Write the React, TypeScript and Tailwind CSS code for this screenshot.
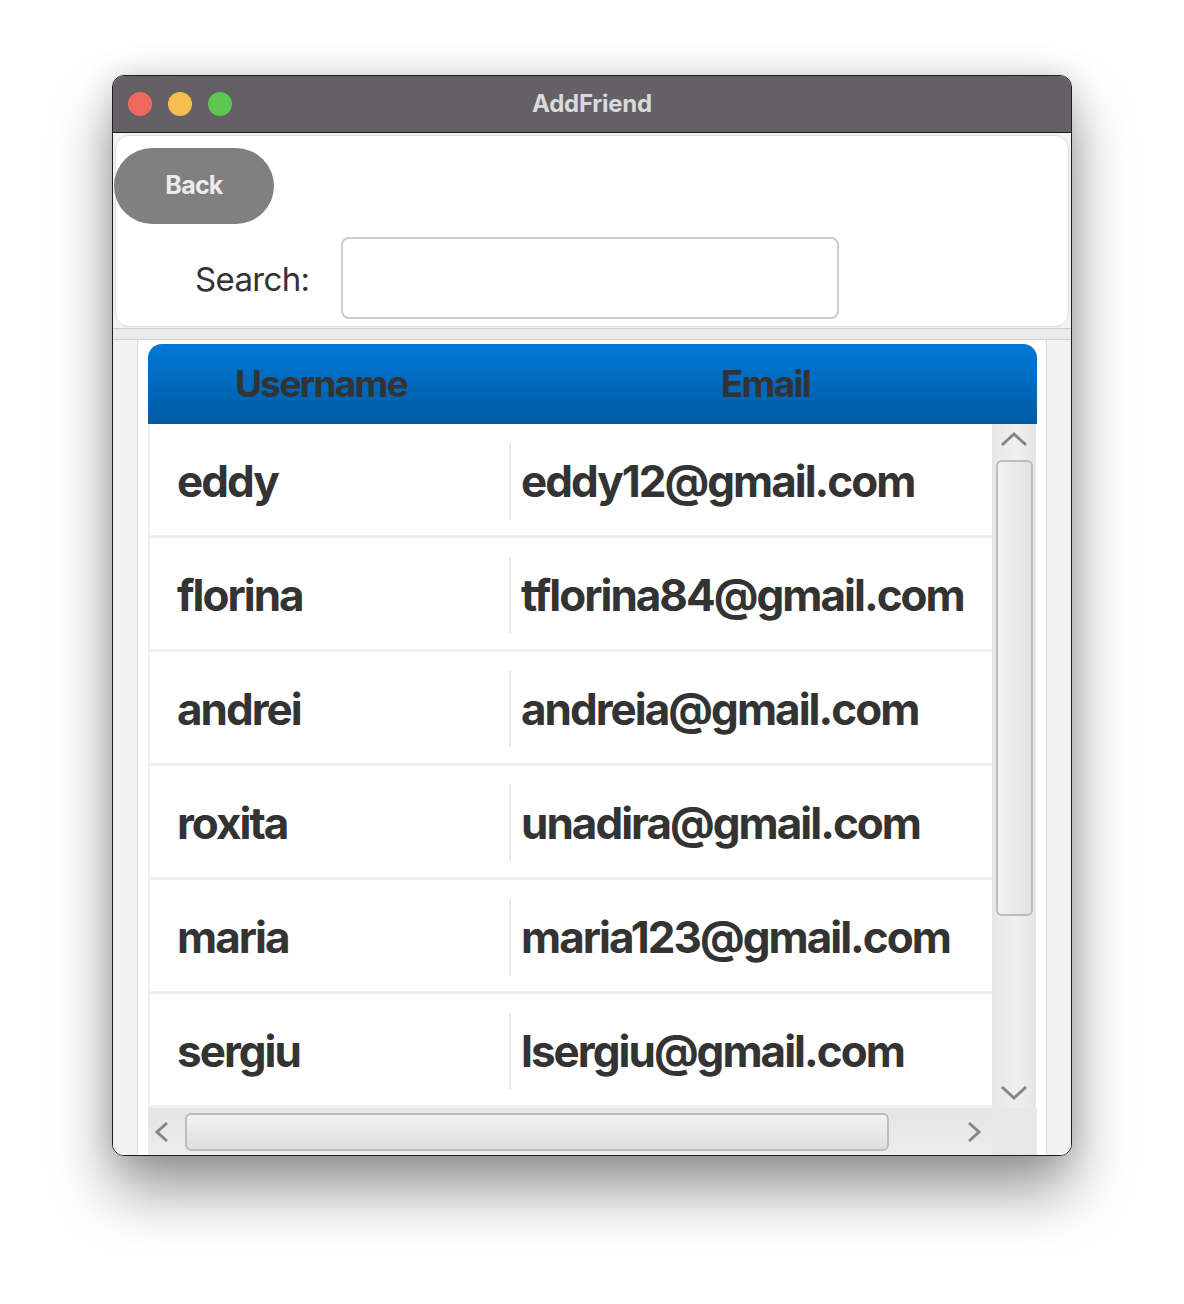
const FRIENDS = [
  { username: 'eddy', email: 'eddy12@gmail.com' },
  { username: 'florina', email: 'tflorina84@gmail.com' },
  { username: 'andrei', email: 'andreia@gmail.com' },
  { username: 'roxita', email: 'unadira@gmail.com' },
  { username: 'maria', email: 'maria123@gmail.com' },
  { username: 'sergiu', email: 'lsergiu@gmail.com' },
]

// scrollbar arrows, flat pointed chevrons like the JavaFX skin
function Arrow({ dir }: { dir: 'up' | 'down' | 'left' | 'right' }) {
  const vertical = dir === 'up' || dir === 'down'
  const points = {
    up: '2,14 14,3 26,14',
    down: '2,2 14,13 26,2',
    left: '13,2 3,11 13,20',
    right: '3,2 13,11 3,20',
  }[dir]
  return (
    <svg
      width={vertical ? 28 : 16}
      height={vertical ? 16 : 22}
      viewBox={vertical ? '0 0 28 16' : '0 0 16 22'}
      className="shrink-0"
    >
      <polyline points={points} fill="none" stroke="#858585" strokeWidth="3" strokeLinejoin="miter" />
    </svg>
  )
}

function TitleBar() {
  return (
    <div className="relative flex h-[57px] items-center border-b border-[#1c1c1c] bg-[#636166] px-[15px]">
      <div className="flex gap-[16px]">
        <span className="h-[24px] w-[24px] rounded-full bg-[#ee6a5e]" />
        <span className="h-[24px] w-[24px] rounded-full bg-[#f5bf4f]" />
        <span className="h-[24px] w-[24px] rounded-full bg-[#5fc553]" />
      </div>
      <div className="absolute inset-x-0 text-center text-[24px] font-bold tracking-[-0.01em] text-[#dadada]">
        AddFriend
      </div>
    </div>
  )
}

function FriendRow({ username, email }: { username: string; email: string }) {
  return (
    <div className="flex h-[114px] items-center border-b-[3px] border-l-2 border-[#efefef] bg-white pt-[2px] text-[44px] font-bold tracking-[-0.045em] text-[#333333]">
      <div className="w-[359px] shrink-0 pl-[27px]">{username}</div>
      <div className="h-[76px] w-[2px] shrink-0 bg-[#e8e8e8]" />
      <div className="pl-[10px] whitespace-nowrap">{email}</div>
    </div>
  )
}

export default function App() {
  return (
    <div
      className="min-h-[1304px] bg-white pl-[112px] pt-[75px]"
      style={{ fontFamily: 'Inter, "Noto Sans", sans-serif' }}
    >
      <div className="flex h-[1081px] w-[960px] flex-col overflow-hidden rounded-[12px] border border-[#1e1e1e] bg-[#f2f2f2] shadow-[0_35px_60px_rgba(0,0,0,0.4),0_0_30px_rgba(0,0,0,0.15)]">
        <TitleBar />

        {/* top panel */}
        <div className="px-[2px] pt-[2px]">
          <div className="h-[192px] rounded-[14px] border border-[#dcdcdc] bg-white">
            <button className="mt-[12px] ml-[-2px] flex h-[76px] w-[160px] items-center justify-center rounded-full bg-[#808080] text-[25px] font-bold tracking-[-0.03em] text-[#eeeaea]">
              Back
            </button>
            <div className="mt-[13px] flex items-center">
              <span className="ml-[79px] w-[146px] pt-[3px] text-[33px] tracking-[-0.02em] text-[#333333]">Search:</span>
              <div className="h-[82px] w-[498px] rounded-[8px] border-2 border-[#cccccc] bg-white" />
            </div>
          </div>
        </div>

        {/* table section */}
        <div className="mt-px h-[12px] border-y border-[#cfcfcf] bg-[#ebebeb]" />
        <div className="flex min-h-0 flex-1">
          <div className="w-[24px] shrink-0 bg-[#f2f2f2]" />
          <div className="flex min-h-0 flex-1 flex-col border-x border-[#dcdcdc] bg-white pl-[10px] pr-[9px] pt-[4px]">
            <div className="flex h-[80px] shrink-0 items-center rounded-t-[14px] bg-gradient-to-b from-[#0078d7] to-[#005ba3] text-[37px] font-bold tracking-[-0.045em] text-[#333333]">
              <div className="w-[346px] text-center">Username</div>
              <div className="flex-1 text-center">Email</div>
            </div>
            <div className="flex h-[684px] shrink-0">
              <div className="w-[844px] shrink-0 overflow-hidden">
                {FRIENDS.map((f) => (
                  <FriendRow key={f.username} username={f.username} email={f.email} />
                ))}
              </div>
              <div className="flex w-[44px] shrink-0 flex-col items-center bg-gradient-to-r from-[#e6e6e6] via-[#efefef] to-[#e6e6e6]">
                <div className="mt-[7px]">
                  <Arrow dir="up" />
                </div>
                <div className="mt-[13px] h-[456px] w-[37px] rounded-[6px] border-2 border-[#bdbdbd] bg-gradient-to-r from-[#f2f2f2] to-[#e2e2e2]" />
                <div className="flex-1" />
                <div className="mb-[7px]">
                  <Arrow dir="down" />
                </div>
              </div>
            </div>
            <div className="flex h-[47px] shrink-0">
              <div className="flex w-[844px] shrink-0 items-center bg-gradient-to-b from-[#e4e4e4] to-[#ededed]">
                <div className="ml-[6px]">
                  <Arrow dir="left" />
                </div>
                <div className="ml-[15px] h-[38px] w-[704px] rounded-[6px] border-2 border-[#bdbdbd] bg-gradient-to-b from-[#f2f2f2] to-[#dedede]" />
                <div className="flex-1" />
                <div className="mr-[10px]">
                  <Arrow dir="right" />
                </div>
              </div>
              <div className="flex-1 bg-[#e8e8e8]" />
            </div>
          </div>
          <div className="w-[24px] shrink-0 bg-[#f2f2f2]" />
        </div>
      </div>
    </div>
  )
}
